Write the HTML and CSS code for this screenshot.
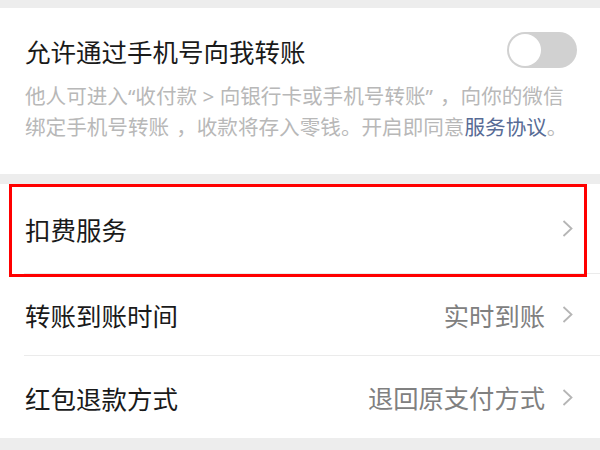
FILE: index.html
```html
<!DOCTYPE html>
<html lang="zh-CN">
<head>
  <meta charset="UTF-8" />
  <meta name="viewport" content="width=device-width, initial-scale=1.0"/>
  <title>转账设置</title>
  <link rel="stylesheet" href="styles.css">
</head>
<body>

<div class="gap-top"></div>

<div class="card switch-card">
  <div class="switch-row">
    <span class="title">允许通过手机号向我转账</span>
    <span class="toggle"><span class="knob"></span></span>
  </div>
  <p class="desc">他人可进入“收付款 &gt; 向银行卡或手机号转账”<span class="comma">，</span>向你的微信<br>绑定手机号转账<span class="comma">，</span>收款将存入零钱。开启即同意<a class="link">服务协议</a>。</p>
</div>

<div class="gap"></div>

<div class="card">
  <div class="row row-first">
    <div class="row-inner">
      <span class="label">扣费服务</span>
      <svg class="arrow" width="11" height="17" viewBox="0 0 11 17"><polyline points="1.5,1 9.5,8.5 1.5,16" fill="none" stroke="#b5b5b5" stroke-width="1.8"/></svg>
    </div>
    <div class="mark"></div>
  </div>
  <div class="row">
    <div class="row-inner">
      <span class="label">转账到账时间</span>
      <span class="value">实时到账</span>
      <svg class="arrow" width="11" height="17" viewBox="0 0 11 17"><polyline points="1.5,1 9.5,8.5 1.5,16" fill="none" stroke="#b5b5b5" stroke-width="1.8"/></svg>
    </div>
  </div>
  <div class="row row-last">
    <div class="row-inner">
      <span class="label">红包退款方式</span>
      <span class="value">退回原支付方式</span>
      <svg class="arrow" width="11" height="17" viewBox="0 0 11 17"><polyline points="1.5,1 9.5,8.5 1.5,16" fill="none" stroke="#b5b5b5" stroke-width="1.8"/></svg>
    </div>
  </div>
</div>

<div class="gap"></div>

</body>
</html>
```

FILE: styles.css
```css
body {
  margin: 0;
  background: #ededed;
  font-family: "Noto Sans", "Noto Sans CJK SC", sans-serif;
  color: #1a1a1a;
  overflow: hidden;
}
.gap-top {
  height: 8px;
}
.gap {
  height: 10px;
}
.card {
  background: #fff;
}
.switch-card {
  padding: 24px 24px 30px 25px;
  height: 112px;
}
.switch-row {
  display: flex;
  align-items: center;
  justify-content: space-between;
  height: 36px;
}
.title {
  font-size: 25.5px;
}
.toggle {
  position: relative;
  width: 70px;
  height: 36px;
  border-radius: 18px;
  background: #d1d1d1;
  margin-right: -1px;
}
.knob {
  position: absolute;
  left: 2px;
  top: 2px;
  width: 32px;
  height: 32px;
  border-radius: 50%;
  background: #fff;
}
.desc {
  margin: 13px 0 0;
  font-size: 20.6px;
  line-height: 31px;
  color: #b8b8b8;
  white-space: nowrap;
}
.comma {
  padding-left: 7px;
}
.link {
  color: #576b95;
}
.row {
  position: relative;
  padding-left: 24px;
}
.row-inner {
  display: flex;
  align-items: center;
  height: 81px;
  padding: 0 27px 0 1px;
  border-bottom: 1px solid #ebebeb;
}
.row-first .row-inner {
  height: 89px;
}
.row-last .row-inner {
  height: 82px;
  border-bottom: none;
}
.label {
  font-size: 25.5px;
  flex: 1;
}
.value {
  font-size: 25.3px;
  color: #808080;
  margin-right: 17px;
}
.row-first .label {
  margin-right: 17px;
}
.arrow {
  display: block;
}
.mark {
  position: absolute;
  top: 0;
  left: 9px;
  width: 578px;
  height: 93px;
  border: 3.5px solid #ff0000;
  box-sizing: border-box;
  z-index: 2;
}
```
